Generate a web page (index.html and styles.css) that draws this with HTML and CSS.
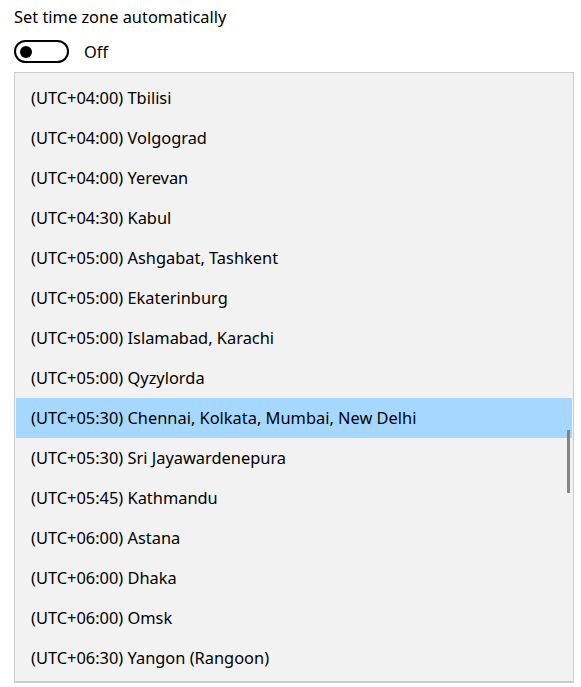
FILE: index.html
```html
<!DOCTYPE html>
<html>
  <head>
    <title>Date and time</title>
    <link rel="stylesheet" href="styles.css">
  </head>
  <body>
    <div class="setting">
      <p class="label">Set time zone automatically</p>
      <div class="toggle-row">
        <span class="toggle"><span class="knob"></span></span>
        <span class="state">Off</span>
      </div>
    </div>
    <div class="dropdown">
      <ul class="zones">
        <li>(UTC+04:00) Tbilisi</li>
        <li>(UTC+04:00) Volgograd</li>
        <li>(UTC+04:00) Yerevan</li>
        <li>(UTC+04:30) Kabul</li>
        <li>(UTC+05:00) Ashgabat, Tashkent</li>
        <li>(UTC+05:00) Ekaterinburg</li>
        <li>(UTC+05:00) Islamabad, Karachi</li>
        <li>(UTC+05:00) Qyzylorda</li>
        <li class="selected">(UTC+05:30) Chennai, Kolkata, Mumbai, New Delhi</li>
        <li>(UTC+05:30) Sri Jayawardenepura</li>
        <li>(UTC+05:45) Kathmandu</li>
        <li>(UTC+06:00) Astana</li>
        <li>(UTC+06:00) Dhaka</li>
        <li>(UTC+06:00) Omsk</li>
        <li>(UTC+06:30) Yangon (Rangoon)</li>
      </ul>
      <div class="scrollbar"></div>
    </div>
  </body>
</html>
```

FILE: styles.css
```css
body {
  margin: 0;
  padding: 0 7px 0 14px;
  background: #fff;
  color: #000;
  font-family: "Noto Sans", "Open Sans", sans-serif;
}

.label {
  margin: 0;
  padding-top: 6px;
  font-size: 16.4px;
  line-height: 22px;
}

.toggle-row {
  display: flex;
  align-items: center;
  gap: 15px;
  margin-top: 12px;
  height: 23px;
}

.toggle {
  display: flex;
  align-items: center;
  box-sizing: border-box;
  width: 55px;
  height: 23px;
  border: 2px solid #000;
  border-radius: 12px;
  padding-left: 4px;
}

.knob {
  width: 12px;
  height: 12px;
  border-radius: 50%;
  background: #000;
}

.state {
  font-size: 16.4px;
}

.dropdown {
  position: relative;
  margin-top: 9px;
  border: 1px solid #cccccc;
  border-bottom-width: 2px;
  background: #f2f2f2;
  height: 608px;
  box-sizing: content-box;
}

.zones {
  list-style-type: none;
  margin: 0;
  padding: 5px 1px;
}

.zones > li {
  height: 40px;
  line-height: 40px;
  padding-left: 15px;
  font-size: 16.4px;
}

.zones > li.selected {
  background: #a6d8ff;
}

.scrollbar {
  position: absolute;
  right: 3px;
  top: 357px;
  width: 3px;
  height: 63px;
  background: #858585;
}
```
